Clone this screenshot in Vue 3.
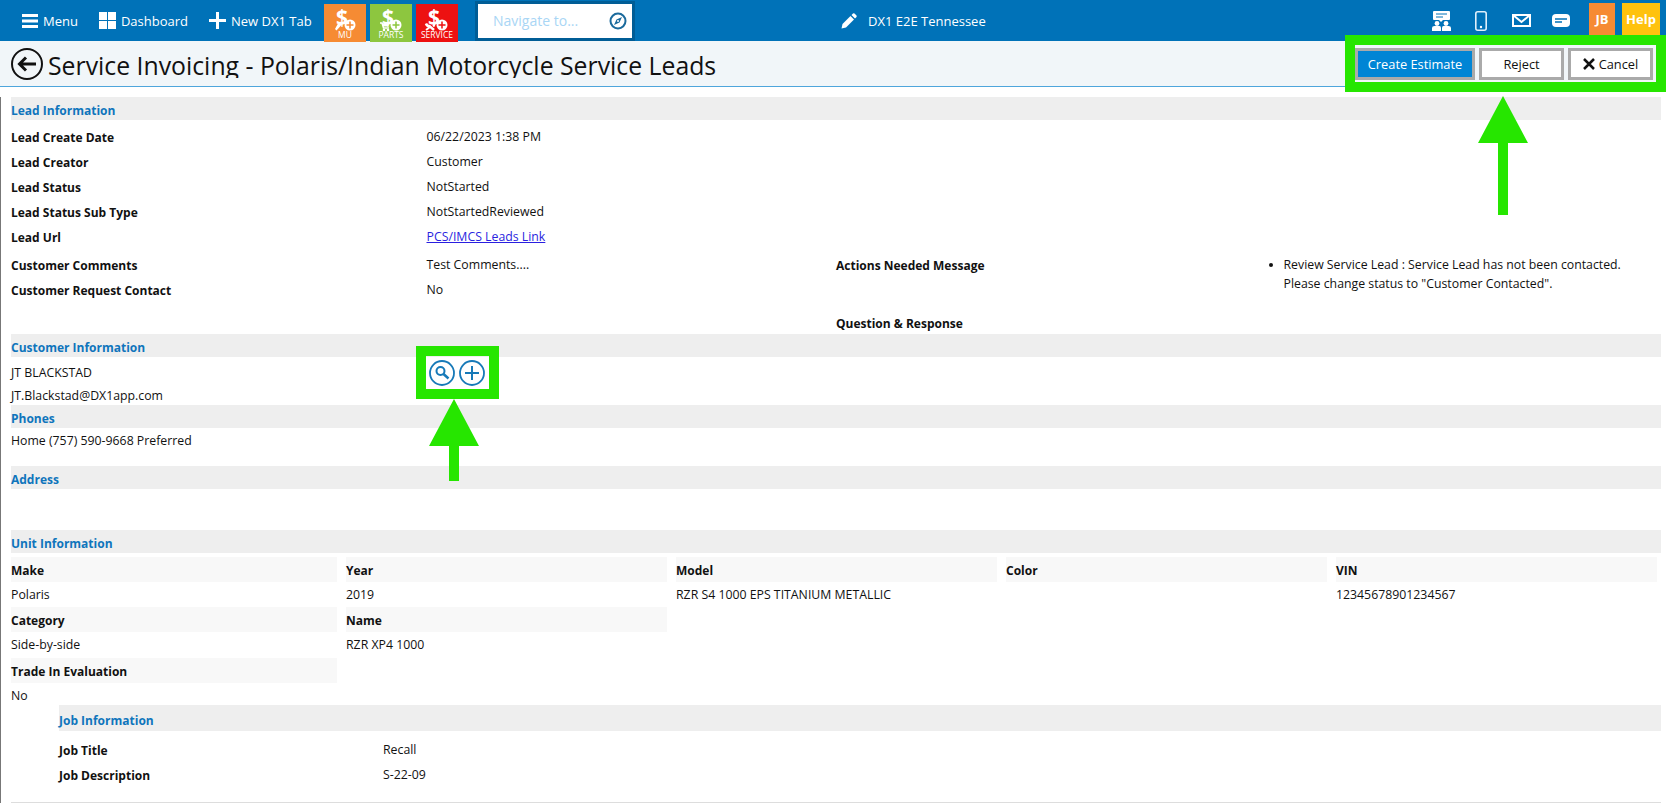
<script setup>
const leadRows = [
  ['Lead Create Date', '06/22/2023 1:38 PM'],
  ['Lead Creator', 'Customer'],
  ['Lead Status', 'NotStarted'],
  ['Lead Status Sub Type', 'NotStartedReviewed'],
]
const firstHead = ['Make', 'Year', 'Model', 'Color', 'VIN']
const firstVal = ['Polaris', '2019', 'RZR S4 1000 EPS TITANIUM METALLIC', '', '12345678901234567']
</script>

<template>
  <div class="page">
    <header class="topbar">
      <div class="nav-left">
        <a class="nav-item">
          <svg width="16" height="14" viewBox="0 0 16 14"><path fill="#fff" d="M0 0h16v3H0zM0 5.500h16v3H0zM0 11h16v3H0z"/></svg>
          <span>Menu</span>
        </a>
        <a class="nav-item">
          <svg width="17" height="17" viewBox="0 0 17 17"><path fill="#fff" d="M0 0h8v8H0zM9 0h8v8H9zM0 9h8v8H0zM9 9h8v8H9z"/></svg>
          <span>Dashboard</span>
        </a>
        <a class="nav-item">
          <svg width="17" height="17" viewBox="0 0 17 17"><path fill="#fff" d="M7 0h3v7h7v3h-7v7H7v-7H0V7h7z"/></svg>
          <span>New DX1 Tab</span>
        </a>
      </div>
      <div class="tiles">
        <div class="tile orange">
          <svg width="30" height="26" viewBox="0 0 30 26">
            <path fill="#fff" d="M8 17.500l3-2 1.500 2-2 2.500-4 4.500-1.500-1.500z"/>
            <circle cx="20" cy="19" r="5.500" fill="#fff"/>
            <path stroke="#f68b33" stroke-width="1.500" d="M20 15.500v7M16.500 19h7"/>
          </svg>
          <b class="dollar">$</b>
          <span>MU</span>
        </div>
        <div class="tile green">
          <svg width="30" height="26" viewBox="0 0 30 26">
            <path fill="none" stroke="#fff" stroke-width="1.500" d="M4 17h2l1.500 5H13"/>
            <path fill="#fff" d="M6 17.500h7l-1 3H7z"/>
            <circle cx="8" cy="24" r="1.300" fill="#fff"/>
            <circle cx="12" cy="24" r="1.300" fill="#fff"/>
            <circle cx="20" cy="19" r="5.500" fill="#fff"/>
            <path stroke="#8dc63f" stroke-width="1.500" d="M20 15.500v7M16.500 19h7"/>
          </svg>
          <b class="dollar">$</b>
          <span>PARTS</span>
        </div>
        <div class="tile red">
          <svg width="30" height="26" viewBox="0 0 30 26">
            <path fill="none" stroke="#fff" stroke-width="2.500" d="M4 17.500q1 3 3.500 2.500L12 24"/>
            <path fill="none" stroke="#fff" stroke-width="2" d="M4 24l4-3M11 20l2-2"/>
            <circle cx="20" cy="19" r="5.500" fill="#fff"/>
            <path stroke="#ed1111" stroke-width="1.500" d="M20 15.500v7M16.500 19h7"/>
          </svg>
          <b class="dollar">$</b>
          <span>SERVICE</span>
        </div>
      </div>
      <div class="nav-search">
        <span>Navigate to...</span>
        <svg width="18" height="18" viewBox="0 0 18 18">
          <circle cx="9" cy="9" r="7.500" fill="none" stroke="#1b6a9c" stroke-width="2"/>
          <path fill="#1b6a9c" d="M13 5 10.500 10.500 5 13 7.500 7.500z"/>
          <circle cx="9" cy="9" r="1" fill="#fff"/>
        </svg>
      </div>
      <div class="location">
        <svg width="16" height="16" viewBox="0 0 16 16"><path fill="#fff" d="M12 .500q.800-.500 1.500 0l2 2q.500.800 0 1.500L14 5.500 10.500 2zM9.500 3 13 6.500 5 14.500 0.500 15.500 1.500 11z"/></svg>
        <span>DX1 E2E Tennessee</span>
      </div>
      <div class="nav-right">
        <svg class="ri-people" width="19" height="20" viewBox="0 0 19 20">
          <path fill="#fff" d="M1 1q0-1 1-1h15q1 0 1 1v7q0 1-1 1h-6l-2 2-2-2H2q-1 0-1-1z"/>
          <path stroke="#0072b8" d="M4 3h11M4 6h7"/>
          <circle cx="5" cy="12.500" r="2.400" fill="#fff"/>
          <circle cx="14" cy="12.500" r="2.400" fill="#fff"/>
          <path fill="#fff" d="M0 20v-3q0-2 2.500-2h5q1.500 0 1.500 2v3zM10 20v-3q0-2 1.500-2h5q2.500 0 2.500 2v3z"/>
        </svg>
        <svg class="ri-phone" width="12" height="20" viewBox="0 0 12 20">
          <rect x=".8" y=".8" width="10.400" height="18.400" rx="2" fill="none" stroke="#dff0fb" stroke-width="1.600"/>
          <circle cx="6" cy="16" r="1.200" fill="#fff"/>
        </svg>
        <svg class="ri-mail" width="19" height="13" viewBox="0 0 19 13">
          <rect x="1" y="1" width="17" height="11" fill="none" stroke="#fff" stroke-width="2"/>
          <path fill="none" stroke="#fff" stroke-width="2" d="M1 1l8.500 7L18 1"/>
        </svg>
        <svg class="ri-chat" width="18" height="13" viewBox="0 0 18 13">
          <rect width="18" height="13" rx="4" fill="#fff"/>
          <path stroke="#0072b8" stroke-width="1.500" d="M3 5h12M3 8h7"/>
        </svg>
        <div class="badge jb">JB</div>
        <div class="badge help">Help</div>
      </div>
    </header>

    <div class="titlebar">
      <svg class="back" width="32" height="32" viewBox="0 0 32 32">
        <circle cx="16" cy="16" r="15" fill="none" stroke="#111" stroke-width="2"/>
        <path fill="none" stroke="#111" stroke-width="3" d="M25 16H9M15 9.500 8.500 16l6.500 6.500"/>
      </svg>
      <h1>Service Invoicing - Polaris/Indian Motorcycle Service Leads</h1>
      <div class="actions">
        <button class="btn primary">Create Estimate</button>
        <button class="btn reject">Reject</button>
        <button class="btn cancel"><svg width="12" height="12" viewBox="0 0 12 12"><path stroke="#111" stroke-width="2.500" d="M1 1l10 10M11 1 1 11"/></svg>Cancel</button>
      </div>
    </div>

    <main class="content">
      <div class="bar first">Lead Information</div>
      <div class="lead-rows">
        <div v-for="r in leadRows" :key="r[0]" class="row">
          <b>{{ r[0] }}</b><span class="val">{{ r[1] }}</span>
        </div>
        <div class="row">
          <b>Lead Url</b><span class="val"><a class="link">PCS/IMCS Leads Link</a></span>
        </div>
      </div>
      <div class="comments">
        <div class="comment-left">
          <div class="row"><b>Customer Comments</b><span class="val">Test Comments....</span></div>
          <div class="row"><b>Customer Request Contact</b><span class="val">No</span></div>
        </div>
        <div class="comment-mid"><b>Actions Needed Message</b></div>
        <ul class="comment-right">
          <li>Review Service Lead : Service Lead has not been contacted.<br>Please change status to "Customer Contacted".</li>
        </ul>
      </div>
      <div class="qr"><b>Question &amp; Response</b></div>

      <div class="bar">Customer Information</div>
      <div class="cust">
        <div class="cust-line name">JT BLACKSTAD
          <span class="cust-icons">
            <svg width="26" height="26" viewBox="0 0 26 26">
              <circle cx="13" cy="13" r="12" fill="#fff" stroke="#1679b8" stroke-width="1.800"/>
              <circle cx="11.500" cy="11" r="4" fill="none" stroke="#1679b8" stroke-width="2"/>
              <path stroke="#1679b8" stroke-width="2.500" d="M14.500 14l5 4.500"/>
            </svg>
            <svg width="26" height="26" viewBox="0 0 26 26">
              <circle cx="13" cy="13" r="12" fill="#fff" stroke="#1679b8" stroke-width="1.800"/>
              <path stroke="#1679b8" stroke-width="2" d="M13 6v14M6 13h14"/>
            </svg>
          </span>
        </div>
        <div class="cust-line">JT.Blackstad@DX1app.com</div>
      </div>
      <div class="bar phones">Phones</div>
      <div class="phone-line">Home (757) 590-9668 Preferred</div>
      <div class="bar address">Address</div>

      <div class="bar unit">Unit Information</div>
      <div class="unit-grid">
        <div v-for="h in firstHead" :key="h" class="uh">{{ h }}</div>
        <div v-for="(v, i) in firstVal" :key="i" class="uv">{{ v }}</div>
        <div class="uh">Category</div><div class="uh">Name</div><div class="blank"></div><div class="blank"></div><div class="blank"></div>
        <div class="uv">Side-by-side</div><div class="uv">RZR XP4 1000</div><div class="blank"></div><div class="blank"></div><div class="blank"></div>
      </div>
      <div class="unit-grid trade">
        <div class="uh">Trade In Evaluation</div>
        <div class="uv no-row">No</div>
      </div>

      <section class="job">
        <div class="bar job-bar">Job Information</div>
        <div class="job-row"><b>Job Title</b><span>Recall</span></div>
        <div class="job-row"><b>Job Description</b><span>S-22-09</span></div>
      </section>
      <div class="rule"></div>
    </main>

    <div class="mark mark-actions"></div>
    <div class="arrow arrow-actions"><i></i><em></em></div>
    <div class="mark mark-icons"></div>
    <div class="arrow arrow-icons"><i></i><em></em></div>
  </div>
</template>

<style>
html, body { margin: 0; background: #fff; overflow: hidden; }
</style>

<style scoped>
.page {
  position: relative;
  width: 1666px;
  height: 803px;
  overflow: hidden;
  font-family: "Open Sans", "Noto Sans", sans-serif;
  font-size: 12.300px;
  color: #111;
  background: #fff;
}
.topbar {
  height: 41px;
  background: #0072b8;
  color: #fff;
  display: flex;
  align-items: center;
}
.nav-left { display: flex; align-items: center; gap: 21px; margin-left: 22px; width: 302px; }
.nav-item { display: flex; align-items: center; gap: 5px; font-size: 13px; }
.tiles { display: flex; gap: 4px; height: 38px; }
.tile {
  position: relative;
  width: 42px;
  height: 38px;
  margin-top: 2px;
  text-align: center;
  line-height: 1;
}
.tile svg { position: absolute; left: 6px; top: 2px; }
.tile .dollar { position: absolute; left: 12px; top: 1px; font-size: 21px; line-height: 24px; }
.tile span { position: absolute; left: 0; right: 0; bottom: 2px; font-size: 8.500px; }
.orange { background: #f68b33; }
.green { background: #8dc63f; }
.red { background: #ed1111; }
.nav-search {
  box-sizing: border-box;
  margin-left: 17px;
  width: 160px;
  height: 40px;
  border: 3px solid #005d96;
  background: #fff;
  display: flex;
  align-items: center;
  justify-content: space-between;
  padding: 0 5px 0 15px;
  color: #a9d6f5;
  font-size: 14px;
}
.location {
  margin-left: 206px;
  display: flex;
  align-items: center;
  gap: 11px;
  font-size: 13px;
}
.nav-right {
  margin-left: auto;
  margin-right: 6px;
  display: flex;
  align-items: center;
}
.ri-phone { margin-left: 24px; }
.ri-mail { margin-left: 25px; }
.ri-chat { margin-left: 21px; }
.badge {
  height: 32px;
  line-height: 32px;
  text-align: center;
  font-weight: 700;
  font-size: 13px;
  margin-top: -3px;
}
.jb { width: 26px; background: #f68b33; margin-left: 19px; }
.help { width: 38px; background: #ffc20e; margin-left: 7px; }

.titlebar {
  box-sizing: border-box;
  height: 46px;
  background: #f1f6f9;
  border-bottom: 1px solid #4ea6dc;
  display: flex;
  align-items: center;
  padding-left: 11px;
}
.back { flex: none; }
.titlebar h1 {
  margin: 0 0 0 5px;
  font-size: 24.800px;
  font-weight: 400;
  line-height: 32px;
  height: 29px;
  overflow: hidden;
  color: #111;
  white-space: nowrap;
}
.actions {
  margin-left: auto;
  margin-right: 13px;
  display: flex;
  gap: 4px;
  align-self: flex-start;
  margin-top: 7px;
}
.btn {
  box-sizing: border-box;
  height: 32px;
  width: 85px;
  border: 3px solid #aaa;
  background: #fff;
  font: inherit;
  font-size: 12.800px;
  color: #111;
  padding: 0;
  display: flex;
  align-items: center;
  justify-content: center;
  gap: 4px;
}
.btn.primary { width: 120px; background: #0085d5; color: #fff; }

.content {
  height: 716px;
  box-sizing: border-box;
  border-left: 1px solid #777;
  padding: 0 5px 0 10px;
}
.bar {
  height: 23px;
  line-height: 27px;
  background: #eee;
  color: #0f75bc;
  font-weight: 700;
  font-size: 12px;
}
.first { margin-top: 10px; }
.lead-rows { margin-top: 5px; }
.row {
  display: grid;
  grid-template-columns: 415.500px 1fr;
  height: 25px;
  line-height: 25px;
}
b { font-weight: 700; font-size: 12px; }
.val { position: relative; top: -1px; }
.link { color: #2a1fe0; text-decoration: underline; }
.comments { display: grid; grid-template-columns: 825px 425px 1fr; margin-top: 3px; }
.comment-mid { line-height: 25px; }
.comment-right {
  margin: 0 0 0 -1.500px;
  padding: 2px 0 0 24px;
  list-style: disc;
  line-height: 19px;
}
.qr { height: 31px; line-height: 25px; padding-left: 825px; padding-top: 8px; box-sizing: border-box; }
.cust { box-sizing: border-box; height: 48px; padding-top: 5px; }
.cust-line { height: 22px; line-height: 22px; position: relative; }
.name { height: 23px; }
.cust-icons {
  position: absolute;
  left: 418px;
  top: -2px;
  display: flex;
  gap: 4px;
}
.phone-line { height: 38px; line-height: 25px; }
.address { margin-bottom: 41px; }
.unit-grid {
  display: grid;
  grid-template-columns: 326px repeat(4, 321px);
  column-gap: 9px;
  margin-top: 4px;
}
.uh {
  height: 25px;
  line-height: 27px;
  background: #f8f8f8;
  font-weight: 700;
  font-size: 12px;
}
.uv { height: 25px; line-height: 25px; }
.unit-grid.trade { margin-top: 1px; }
.unit-grid.trade .uv { grid-column: 1; }
.uv.no-row { height: 22px; }
.job { margin: 0 0 0 48px; }
.job-bar { height: 26px; line-height: 31px; }
.job-row {
  display: grid;
  grid-template-columns: 324px 1fr;
  height: 25px;
  line-height: 25px;
}
.job-bar + .job-row { margin-top: 7px; }
.job-row span { position: relative; top: -1px; }
.rule { height: 1px; background: #ddd; margin-top: 14px; }

.mark { position: absolute; box-sizing: border-box; border: 10px solid #26e600; }
.mark-actions { left: 1345px; top: 35px; width: 321px; height: 57px; }
.mark-icons { left: 416px; top: 346px; width: 83px; height: 53px; }
.arrow { position: absolute; display: flex; flex-direction: column; align-items: center; }
.arrow i { display: block; width: 0; height: 0; border-left: 25px solid transparent; border-right: 25px solid transparent; border-bottom: 47px solid #26e600; }
.arrow em { display: block; width: 10px; background: #26e600; }
.arrow-actions { left: 1478px; top: 96px; }
.arrow-actions em { height: 72px; }
.arrow-icons { left: 429px; top: 399px; }
.arrow-icons em { height: 35px; }
</style>
